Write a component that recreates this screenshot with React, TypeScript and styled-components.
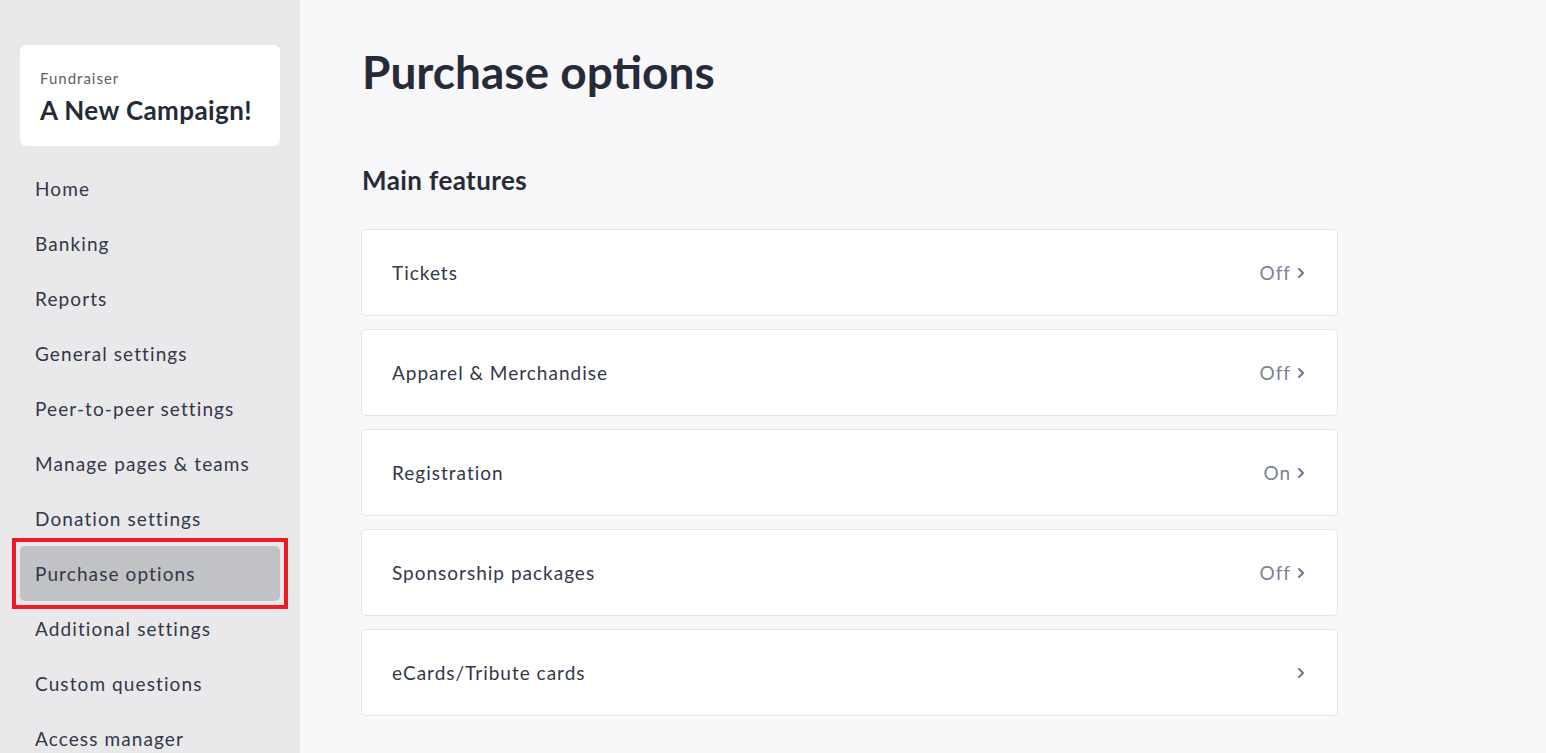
import React from "react";
import styled, { createGlobalStyle } from "styled-components";

const Global = createGlobalStyle`
  html, body { margin: 0; padding: 0; height: 100%; }
  body { font-family: Lato, "Open Sans", sans-serif; background: #f8f8fa; color: #2a2d3a; overflow: hidden; }
  * { box-sizing: border-box; }
`;

const Layout = styled.div`
  display: flex;
  width: 1546px;
  height: 753px;
  overflow: hidden;
`;

const Sidebar = styled.aside`
  width: 300px;
  flex-shrink: 0;
  background: #e9e9eb;
  padding: 45px 20px 0;
  display: flex;
  flex-direction: column;
`;

const CampaignCard = styled.div`
  background: #ffffff;
  border-radius: 6px;
  padding: 24px 20px 20px;
  height: 101px;
  margin-bottom: 15px;
  flex-shrink: 0;
`;

const CardLabel = styled.div`
  font-size: 15px;
  color: #5b5f6b;
  line-height: 18px;
  letter-spacing: 1px;
`;

const CardTitle = styled.div`
  font-size: 26px;
  font-weight: 700;
  color: #262a36;
  line-height: 32px;
  margin-top: 7px;
  letter-spacing: 0.4px;
`;

const NavList = styled.nav`
  display: flex;
  flex-direction: column;
`;

const NavItem = styled.div<{ $active?: boolean }>`
  position: relative;
  height: 55px;
  flex-shrink: 0;
  display: flex;
  align-items: center;
  padding-left: 15px;
  font-size: 19px;
  letter-spacing: 1.1px;
  color: #33374a;
  border-radius: 5px;
  background: ${(p) => (p.$active ? "#c1c2c5" : "transparent")};

  &::after {
    content: "";
    display: ${(p) => (p.$active ? "block" : "none")};
    position: absolute;
    inset: -8px;
    border: 4px solid #ed1c24;
  }
`;

const Main = styled.main`
  flex: 1;
  padding: 40px 0 0 61px;
`;

const PageTitle = styled.h1`
  margin: 0 0 0 1px;
  font-size: 46px;
  font-weight: 700;
  line-height: 64px;
  color: #272b37;
`;

const SectionTitle = styled.h2`
  margin: 61px 0 0 1px;
  font-size: 26px;
  font-weight: 700;
  line-height: 30px;
  letter-spacing: 0.4px;
  color: #272b37;
`;

const RowList = styled.div`
  margin-top: 34px;
  width: 977px;
  display: flex;
  flex-direction: column;
  gap: 13px;
`;

const Row = styled.div`
  height: 87px;
  background: #ffffff;
  border: 1px solid #e3e4e8;
  border-radius: 5px;
  display: flex;
  align-items: center;
  justify-content: space-between;
  padding: 0 31px 0 30px;
`;

const RowLabel = styled.span`
  font-size: 19px;
  letter-spacing: 1px;
  color: #33374a;
`;

const RowStatus = styled.span`
  display: flex;
  align-items: center;
  gap: 5px;
  font-size: 19px;
  letter-spacing: 1px;
  color: #7c8297;
`;

const Chevron = () => (
  <svg width="10" height="12" viewBox="0 0 10 12" fill="none">
    <path d="M3 2l4 4-4 4" stroke="#6e7591" strokeWidth="2" strokeLinecap="round" strokeLinejoin="round" />
  </svg>
);

const navItems = [
  "Home",
  "Banking",
  "Reports",
  "General settings",
  "Peer-to-peer settings",
  "Manage pages & teams",
  "Donation settings",
  "Purchase options",
  "Additional settings",
  "Custom questions",
  "Access manager",
];

const rows: { label: string; status?: string }[] = [
  { label: "Tickets", status: "Off" },
  { label: "Apparel & Merchandise", status: "Off" },
  { label: "Registration", status: "On" },
  { label: "Sponsorship packages", status: "Off" },
  { label: "eCards/Tribute cards" },
];

export default function App() {
  return (
    <>
      <Global />
      <Layout>
        <Sidebar>
          <CampaignCard>
            <CardLabel>Fundraiser</CardLabel>
            <CardTitle>A New Campaign!</CardTitle>
          </CampaignCard>
          <NavList>
            {navItems.map((n) => (
              <NavItem key={n} $active={n === "Purchase options"}>
                {n}
              </NavItem>
            ))}
          </NavList>
        </Sidebar>
        <Main>
          <PageTitle>Purchase options</PageTitle>
          <SectionTitle>Main features</SectionTitle>
          <RowList>
            {rows.map((r) => (
              <Row key={r.label}>
                <RowLabel>{r.label}</RowLabel>
                <RowStatus>
                  {r.status}
                  <Chevron />
                </RowStatus>
              </Row>
            ))}
          </RowList>
        </Main>
      </Layout>
    </>
  );
}
